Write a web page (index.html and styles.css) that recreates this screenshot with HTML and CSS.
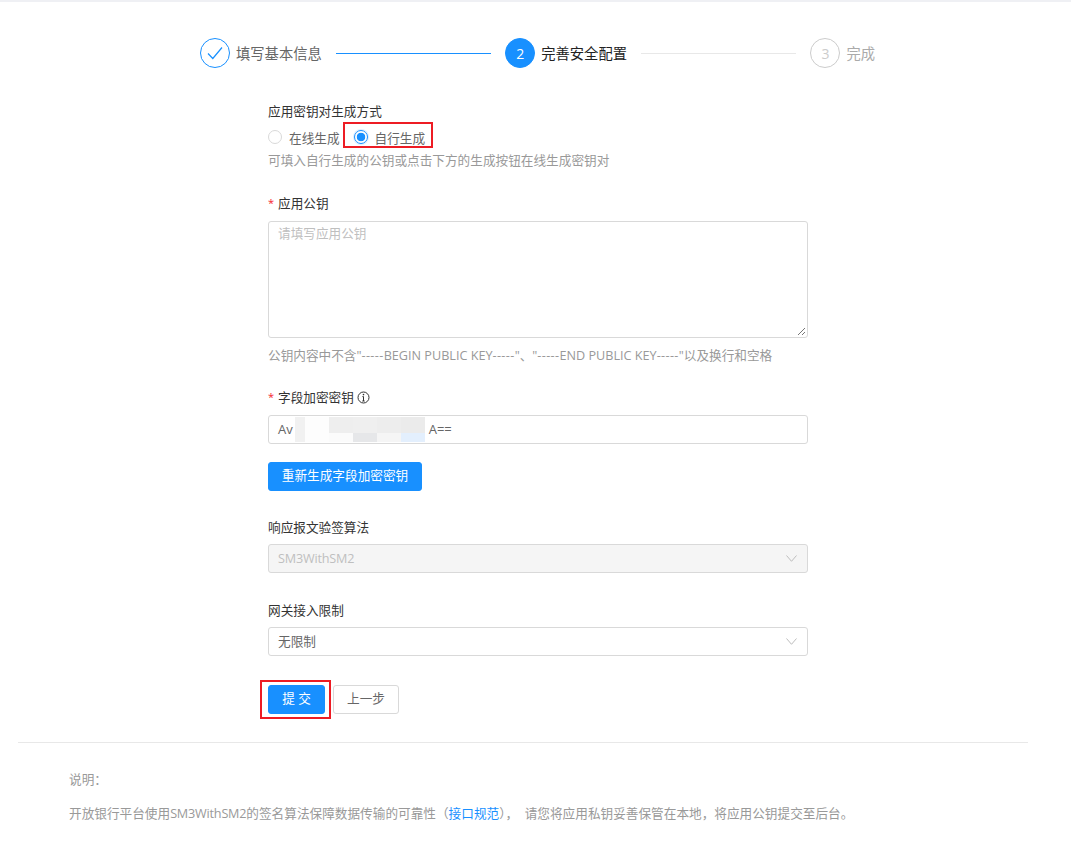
FILE: index.html
```html
<!DOCTYPE html>
<html lang="zh-CN">
<head>
<meta charset="utf-8">
<title>完善安全配置</title>
<link rel="stylesheet" href="styles.css">
</head>
<body>
<div class="topbar"></div>
<main class="page">
  <div class="steps">
    <div class="step done">
      <span class="step-icon"><svg width="16" height="14" viewBox="0 0 16 14"><path d="M1 7.5 L5.8 12.5 L15 1.5" fill="none" stroke="#1890ff" stroke-width="1.2"/></svg></span>
      <span class="step-title">填写基本信息</span>
    </div>
    <span class="step-line line-done"></span>
    <div class="step active">
      <span class="step-icon">2</span>
      <span class="step-title">完善安全配置</span>
    </div>
    <span class="step-line"></span>
    <div class="step wait">
      <span class="step-icon">3</span>
      <span class="step-title">完成</span>
    </div>
  </div>

  <form class="form">
    <div class="field field-radio">
      <div class="label">应用密钥对生成方式</div>
      <div class="radios">
        <label class="radio"><span class="radio-dot"></span>在线生成</label>
        <label class="radio checked"><span class="radio-dot"></span>自行生成</label>
      </div>
      <div class="hint hint-radio">可填入自行生成的公钥或点击下方的生成按钮在线生成密钥对</div>
    </div>

    <div class="field field-pub">
      <div class="label"><i class="req">*</i>应用公钥</div>
      <div class="textarea-box">
        <div class="placeholder">请填写应用公钥</div>
        <svg class="resize" width="9" height="9" viewBox="0 0 9 9"><path d="M1 8 L8 1 M5 8 L8 5" stroke="#777" stroke-width="1" fill="none"/></svg>
      </div>
      <div class="hint hint-pub">公钥内容中不含"<span class="dash">-----</span>BEGIN PUBLIC KEY<span class="dash">-----</span>"、"<span class="dash">-----</span>END PUBLIC KEY<span class="dash">-----</span>"以及换行和空格</div>
    </div>

    <div class="field field-key">
      <div class="label"><i class="req">*</i>字段加密密钥<svg class="info" width="13" height="13" viewBox="0 0 13 13"><circle cx="6.5" cy="6.5" r="5.5" fill="none" stroke="#333" stroke-width="1"/><path d="M6.5 5.5 V10 M5.3 10 H7.7 M5.4 5.6 H6.5" stroke="#333" stroke-width="1" fill="none"/><circle cx="6.5" cy="3.6" r=".8" fill="#333"/></svg></div>
      <div class="input input-key">
        <span>Av</span>
        <span class="masked">
          <b class="m m-a"></b>
          <b class="m m-b"></b><b class="m m-c"></b><b class="m m-d"></b><b class="m m-e"></b><b class="m m-f"></b>
          <b class="m m-g"></b><b class="m m-h"></b><b class="m m-i"></b><b class="m m-j"></b>
        </span>
        <span>A==</span>
      </div>
      <button type="button" class="btn primary regen">重新生成字段加密密钥</button>
    </div>

    <div class="field field-sign">
      <div class="label">响应报文验签算法</div>
      <div class="input select disabled"><span class="latin">SM3WithSM2</span><svg class="chevron" width="11" height="7" viewBox="0 0 11 7"><path d="M.5 .5 L5.5 6.3 L10.5 .5" fill="none" stroke="#bdbdbd"/></svg></div>
    </div>

    <div class="field field-limit">
      <div class="label">网关接入限制</div>
      <div class="input select"><span>无限制</span><svg class="chevron" width="11" height="7" viewBox="0 0 11 7"><path d="M.5 .5 L5.5 6.3 L10.5 .5" fill="none" stroke="#bdbdbd"/></svg></div>
    </div>

    <div class="actions">
      <button type="button" class="btn primary submit">提 交</button>
      <button type="button" class="btn prev">上一步</button>
    </div>
  </form>

  <hr class="divider">

  <section class="notes">
    <p>说明：</p>
    <p>开放银行平台使用<span class="latin">SM3WithSM2</span>的签名算法保障数据传输的可靠性（<a href="#">接口规范</a>），&nbsp;&nbsp;请您将应用私钥妥善保管在本地，将应用公钥提交至后台。</p>
  </section>
</main>
</body>
</html>
```
FILE: styles.css
```css
* { box-sizing: border-box; }
html, body { margin: 0; padding: 0; background: #fff; }
body {
  font-family: "Open Sans", "Noto Sans CJK SC", sans-serif;
  font-size: 12.65px;
  color: #333;
  height: 844px;
  overflow: hidden;
}
.topbar { height: 2px; background: #eff0f4; }
.page { padding: 0 43px 0 18px; }

.steps {
  display: flex;
  align-items: center;
  margin: 36px 0 0 182px;
  height: 30px;
  width: 675px;
}
.step { display: flex; align-items: center; gap: 6px; flex: none; }
.step-icon {
  width: 30px; height: 30px; border-radius: 50%;
  display: flex; align-items: center; justify-content: center;
  border: 1px solid #1890ff; font-size: 14px;
}
.step-title { font-size: 14.3px; color: #666; padding-bottom: 2px; }
.step.active .step-icon { background: #1890ff; color: #fff; }
.step.active .step-title { color: #222; }
.step.wait .step-icon { border-color: #ccc; color: #ccc; }
.step.wait .step-title { color: #aaa; }
.step-line { flex: 1; height: 1px; background: #e8e8e8; margin: 0 14px; }
.line-done { background: #1890ff; }

.form { width: 540px; margin-left: 250px; }
.field { display: block; }
.label { height: 18px; padding-bottom: 2px; line-height: 16px; color: #333; display: flex; align-items: center; }
.req { color: #f5222d; font-style: normal; width: 10px; font-size: 11px; }
.info { margin-left: 3px; }
.hint { color: #999; height: 18px; line-height: 16px; }
.dash { letter-spacing: .35px; }
.latin { letter-spacing: -.2px; }

.field-radio { margin-top: 35px; }
.radios { display: flex; align-items: center; gap: 14px; height: 26px; margin-top: 4px; padding-bottom: 2px; }
.radio { display: flex; align-items: center; gap: 7px; color: #666; }
.radio-dot {
  width: 14px; height: 14px; border-radius: 50%; border: 1px solid #d9d9d9;
  display: block; background: #fff;
}
.radio.checked { position: relative; }
.radio.checked .radio-dot { border-color: #1890ff; box-shadow: 0 0 0 1px rgba(24,144,255,.15); background: radial-gradient(circle, #1890ff 0 4px, #fff 4.6px); }
.radio.checked::after {
  content: ""; position: absolute; left: -11px; top: -6px; width: 86px; height: 22px;
  border: 2px solid #ed1c24;
}
.hint-radio { margin-top: 1px; }

.field-pub { margin-top: 25px; }
.textarea-box {
  position: relative; height: 117px; margin-top: 8px; padding: 3px 9px;
  border: 1px solid #d9d9d9; border-radius: 3px;
}
.placeholder { color: #bfbfbf; height: 18px; line-height: 16px; }
.resize { position: absolute; right: 1px; bottom: 1px; }
.hint-pub { margin-top: 9px; }

.field-key { margin-top: 24px; }
.input {
  display: flex; align-items: center; height: 29px; margin-top: 8px; padding: 0 9px 2px;
  border: 1px solid #d9d9d9; border-radius: 3px; color: #666; background: #fff;
}
.input-key { font-size: 13px; }
.masked {
  display: grid;
  grid-template-columns: 10px 24px 24px 24px 24px 24px;
  grid-template-rows: 16px 9px;
  width: 130px; height: 25px; margin: 2px 4px 0 2px;
}
.m { display: block; }
.m-a { background: #f1f1f1; grid-row: 1 / 3; }
.m-b { background: #eeeeee; }
.m-c { background: #fdfdfd; grid-row: 1 / 3; }
.m-d { background: #efefef; }
.m-e { background: #ededed; }
.m-f { background: #ebebeb; }
.m-g { background: #fbfbfb; }
.m-h { background: #e6e7e9; }
.m-i { background: #f5f5f5; }
.m-j { background: #e3effd; }

.btn {
  font: inherit; height: 29px; border-radius: 3px; cursor: pointer; display: block;
  border: 1px solid #d9d9d9; background: #fff; color: #666; padding: 0 0 4px;
}
.primary { background: #1890ff; border-color: #1890ff; color: #fff; }
.regen { width: 154px; margin-top: 18px; }

.field-sign { margin-top: 28px; }
.select { justify-content: space-between; padding-right: 10px; margin-top: 7px; }
.chevron { margin-top: 2px; }
.disabled { background: #f5f5f5; color: #bfbfbf; }
.field-limit { margin-top: 29px; }

.actions { display: flex; gap: 8px; margin-top: 29px; position: relative; }
.submit { width: 57px; position: relative; }
.submit::after {
  content: ""; position: absolute; left: -9px; top: -6px; width: 67px; height: 35px;
  border: 2px solid #ed1c24;
}
.prev { width: 66px; }

.divider { border: 0; border-top: 1px solid #e8e8e8; margin: 28px 0 0; width: 1010px; }
.notes { margin: 28px 0 0 51px; color: #999; }
.notes p { margin: 0 0 16px; height: 18px; line-height: 16px; }
.notes a { color: #1890ff; text-decoration: none; }
```
